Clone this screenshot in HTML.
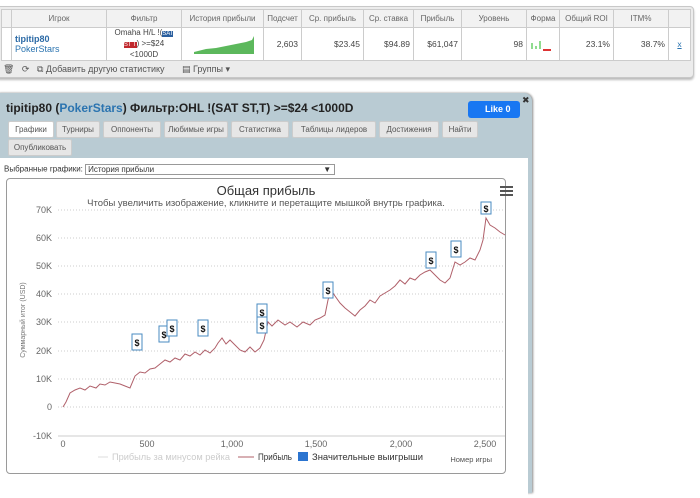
<!DOCTYPE html>
<html><head><meta charset="utf-8"><style>
*{box-sizing:border-box;margin:0;padding:0}
body{width:700px;height:482px;background:#fff;font-family:"Liberation Sans","DejaVu Sans",sans-serif;position:relative;overflow:hidden;font-size:9px;color:#333}
.top{position:absolute;left:-4px;top:6px;width:698px;height:72px;border:1px solid #c8c8c8;border-radius:4px;background:#ececec;box-shadow:0 2px 2px #bbb}
table{position:absolute;left:4px;top:2px;border-collapse:collapse;font-size:8.5px;table-layout:fixed;width:689px}
td{border:1px solid #ccc;text-align:right;padding:0 3px;color:#444;white-space:nowrap;overflow:hidden}
tr.h td{background:#f2f2f2;height:18px;text-align:center;color:#666;font-size:8px;padding:0 1px}
tr.d td{background:#fff;height:32px}
.tb{position:absolute;left:6px;top:57px;font-size:9px;color:#555}
.modal{position:absolute;left:-2px;top:93px;width:534px;height:400px;background:#b9cbd3;border-radius:0 8px 0 0;box-shadow:1px 0 2px #888}
.title{position:absolute;left:8px;top:8px;font-size:12px;font-weight:bold;color:#222}
.title span{color:#2b74b0}
.like{position:absolute;left:470px;top:8px;width:52px;height:17px;background:#1877f2;color:#fff;border-radius:3px;font-size:9px;font-weight:bold;padding:3px 0 0 17px}
.x{position:absolute;left:524px;top:2px;font-size:9px;font-weight:bold}
.tab{position:absolute;height:17px;background:#e6e6e6;border:1px solid #ccc;border-radius:2px;font-size:8px;color:#555;text-align:center;line-height:15px}
.content{position:absolute;left:2px;top:65px;width:528px;height:340px;background:#fff}
</style></head><body>
<div class="top">
<table>
<colgroup><col style="width:10px"><col style="width:95px"><col style="width:75px"><col style="width:82px"><col style="width:38px"><col style="width:62px"><col style="width:50px"><col style="width:48px"><col style="width:65px"><col style="width:33px"><col style="width:54px"><col style="width:55px"><col style="width:22px"></colgroup>
<tr class="h"><td></td><td>Игрок</td><td>Фильтр</td><td>История прибыли</td><td>Подсчет</td><td>Ср. прибыль</td><td>Ср. ставка</td><td>Прибыль</td><td>Уровень</td><td>Форма</td><td>Общий ROI</td><td>ITM%</td><td></td></tr>
<tr class="d"><td></td><td style="text-align:left;line-height:10px;font-size:9px"><b style="color:#2b6aa6">tipitip80</b><br><span style="color:#2b74b0">PokerStars</span></td><td style="text-align:center;line-height:10px;font-size:8px;padding:0">Omaha H/L !(<span style="background:#2b5f9e;color:#fff;font-size:6px">SAT</span><br><span style="background:#c0282d;color:#fff;font-size:6px">ST T</span>) &gt;=$24<br>&lt;1000D</td><td><svg width="74" height="26" viewBox="0 0 74 26"><path d="M8 22 L20 19 L30 18 L40 16 L50 14 L60 12 L66 10 L68 6 L68 24 L8 24Z" fill="#5cb85c"/></svg></td><td>2,603</td><td>$23.45</td><td>$94.89</td><td>$61,047</td><td>98</td><td style="text-align:left;padding:0"><svg width="28" height="20"><rect x="4" y="10" width="2" height="6" fill="#8fdc8f"/><rect x="8" y="13" width="2" height="3" fill="#8fdc8f"/><rect x="12" y="8" width="2" height="8" fill="#8fdc8f"/><rect x="16" y="16" width="8" height="2" fill="#d33"/></svg></td><td>23.1%</td><td>38.7%</td><td style="text-align:center;color:#2b74b0;text-decoration:underline">x</td></tr>
</table>
<div class="tb">🗑 &nbsp; ⟳ &nbsp; ⧉ Добавить другую статистику &nbsp; &nbsp; &nbsp; ▤ Группы ▾</div>
</div>
<div class="modal">
<div class="title">tipitip80 (<span>PokerStars</span>) Фильтр:OHL !(SAT ST,T) &gt;=$24 &lt;1000D</div>
<div class="like">Like 0</div><div class="x">✖</div>
<div class="tab" style="left:10px;top:28px;width:46px;background:#fff">Графики</div>
<div class="tab" style="left:58px;top:28px;width:44px">Турниры</div>
<div class="tab" style="left:105px;top:28px;width:58px">Оппоненты</div>
<div class="tab" style="left:166px;top:28px;width:64px">Любимые игры</div>
<div class="tab" style="left:233px;top:28px;width:58px">Статистика</div>
<div class="tab" style="left:294px;top:28px;width:84px">Таблицы лидеров</div>
<div class="tab" style="left:381px;top:28px;width:60px">Достижения</div>
<div class="tab" style="left:444px;top:28px;width:36px">Найти</div>
<div class="tab" style="left:10px;top:46px;width:64px">Опубликовать</div>
<div class="content">
<div style="position:absolute;left:4px;top:6px;font-size:8px">Выбранные графики: <span style="display:inline-block;width:250px;border:1px solid #999;height:11px;vertical-align:middle;line-height:9px;padding-left:2px">История прибыли<span style="float:right;padding-right:3px">▼</span></span></div>
<div style="position:absolute;left:6px;top:20px;width:500px;height:296px;border:1px solid #9a9a9a;border-radius:4px"></div>
</div>
</div>
<svg style="position:absolute;left:0;top:0" width="700" height="482" font-family="Liberation Sans, sans-serif">
<text x="266" y="195" font-size="13" fill="#333" text-anchor="middle">Общая прибыль</text>
<text x="266" y="206" font-size="9.5" fill="#555" text-anchor="middle">Чтобы увеличить изображение, кликните и перетащите мышкой внутрь графика.</text>
<g fill="#555"><rect x="500" y="186" width="13" height="2"/><rect x="500" y="190" width="13" height="2"/><rect x="500" y="194" width="13" height="2"/></g>
<g stroke="#ccc" stroke-dasharray="1,2" stroke-width="1">
<line x1="58" x2="505" y1="210" y2="210"/><line x1="58" x2="505" y1="238" y2="238"/><line x1="58" x2="505" y1="266" y2="266"/><line x1="58" x2="505" y1="294" y2="294"/><line x1="58" x2="505" y1="322" y2="322"/><line x1="58" x2="505" y1="351" y2="351"/><line x1="58" x2="505" y1="379" y2="379"/><line x1="58" x2="505" y1="407" y2="407"/></g>
<line x1="58" x2="505" y1="436" y2="436" stroke="#ccc"/>
<g font-size="9" fill="#666" text-anchor="end">
<text x="52" y="213">70K</text><text x="52" y="241">60K</text><text x="52" y="269">50K</text><text x="52" y="297">40K</text><text x="52" y="325">30K</text><text x="52" y="354">20K</text><text x="52" y="382">10K</text><text x="52" y="410">0</text><text x="52" y="439">-10K</text></g>
<g font-size="9" fill="#666" text-anchor="middle"><text x="63" y="447">0</text><text x="147" y="447">500</text><text x="232" y="447">1,000</text><text x="316" y="447">1,500</text><text x="401" y="447">2,000</text><text x="485" y="447">2,500</text></g>
<text transform="translate(25,320) rotate(-90)" font-size="7" fill="#777" text-anchor="middle">Суммарный итог (USD)</text>
<polyline fill="none" stroke="#b0606a" stroke-width="1" points="63,407 66,402 70,393 75,390 80,388 85,390 90,386 96,388 100,384 105,385 110,382 115,383 120,384 125,386 130,388 135,376 140,372 145,373 150,369 155,368 160,364 165,360 170,362 175,358 180,360 185,354 190,356 195,352 200,355 205,350 210,353 215,348 218,343 222,338 226,344 230,340 235,345 240,350 245,352 250,347 255,352 260,348 264,340 268,322 272,326 278,320 285,325 290,322 297,327 303,322 310,325 315,320 320,318 325,315 328,300 331,290 335,296 340,303 345,308 350,312 355,316 360,310 365,306 370,300 375,303 380,296 385,293 390,290 395,286 400,280 405,284 410,278 415,280 420,275 425,272 430,270 435,275 440,280 445,283 450,278 455,262 460,265 465,262 470,258 475,260 480,250 483,240 486,218 490,225 495,228 500,232 505,235"/>
<g fill="#fff" stroke="#4a8bc2" font-size="9" font-weight="bold">
<rect x="132" y="334" width="10" height="16"/><rect x="159" y="326" width="10" height="16"/><rect x="167" y="320" width="10" height="16"/><rect x="198" y="320" width="10" height="16"/><rect x="257" y="304" width="10" height="16"/><rect x="257" y="317" width="10" height="16"/><rect x="323" y="282" width="10" height="16"/><rect x="426" y="252" width="10" height="16"/><rect x="451" y="241" width="10" height="16"/><rect x="481" y="202" width="10" height="12"/></g>
<g font-size="9" font-weight="bold" fill="#111" text-anchor="middle"><text x="137" y="346">$</text><text x="164" y="338">$</text><text x="172" y="332">$</text><text x="203" y="332">$</text><text x="262" y="316">$</text><text x="262" y="329">$</text><text x="328" y="294">$</text><text x="431" y="264">$</text><text x="456" y="253">$</text><text x="486" y="212">$</text></g>
<line x1="98" x2="108" y1="457" y2="457" stroke="#ddd"/><text x="112" y="460" font-size="9.5" fill="#ccc" textLength="118" lengthAdjust="spacingAndGlyphs">Прибыль за минусом рейка</text>
<line x1="238" x2="254" y1="457" y2="457" stroke="#b0606a"/><text x="258" y="460" font-size="9.5" fill="#333" textLength="34" lengthAdjust="spacingAndGlyphs">Прибыль</text>
<rect x="298" y="452" width="10" height="9" fill="#2b74d0"/><text x="312" y="460" font-size="9.5" fill="#333" textLength="111" lengthAdjust="spacingAndGlyphs">Значительные выигрыши</text>
<text x="492" y="462" font-size="7.5" fill="#555" text-anchor="end">Номер игры</text>
</svg>
</body></html>
